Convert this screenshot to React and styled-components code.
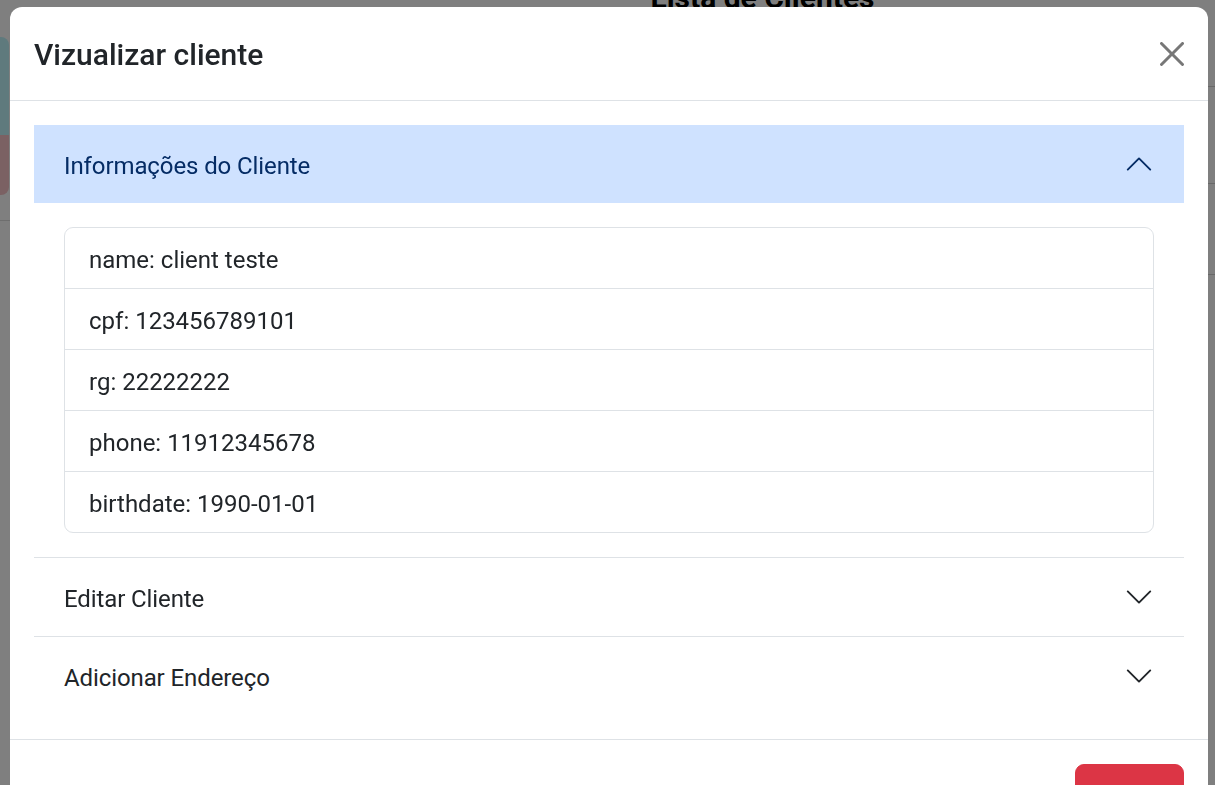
import React from 'react';
import styled, { createGlobalStyle } from 'styled-components';

const Global = createGlobalStyle`
  html, body { margin: 0; padding: 0; height: 100%; overflow: hidden; }
  body {
    font-family: Roboto, "Liberation Sans", sans-serif;
    color: #212529;
    background: #fff;
  }
  * { box-sizing: border-box; }
`;

/* ---------- background page (dimmed) ---------- */
const Page = styled.div`
  display: grid;
  grid-template-columns: 10px 1fr;
  height: 100vh;
`;

const SideCol = styled.div`
  display: flex;
  flex-direction: column;
  padding-top: 37px;
`;

const SideCard = styled.div`
  display: flex;
  flex-direction: column;
  width: 9px;
  border-radius: 0 8px 8px 0;
  overflow: hidden;
`;

const SideBlock = styled.div`
  height: ${(p) => p.$h}px;
  background: ${(p) => p.$bg};
`;

const SideRule = styled.div`
  margin-top: 25px;
  border-top: 1px solid #dcdcdc;
`;

const Main = styled.div`
  display: flex;
  flex-direction: column;
`;

const PageTitle = styled.h2`
  margin: -22px 0 0 0;
  padding-left: 300px;
  text-align: center;
  font-size: 30px;
  font-weight: 700;
  line-height: 40px;
  color: #000;
`;

const TableRow = styled.div`
  height: ${(p) => p.$h}px;
  border-bottom: 1px solid #d0d0d0;
`;

const Backdrop = styled.div`
  position: fixed;
  inset: 0;
  background: rgba(0, 0, 0, 0.5);
  z-index: 1;
`;

/* ---------- modal ---------- */
const Dialog = styled.div`
  position: fixed;
  top: 7px;
  left: 10px;
  right: 7px;
  z-index: 2;
  background: #fff;
  border-radius: 12px;
  overflow: hidden;
`;

const Header = styled.div`
  height: 94px;
  display: flex;
  align-items: center;
  justify-content: space-between;
  padding: 0 24px;
  border-bottom: 1px solid #dee2e6;
`;

const Title = styled.h5`
  margin: 0;
  padding-top: 2px;
  font-size: 30px;
  font-weight: 500;
  line-height: 36px;
  color: #212529;
`;

const CloseButton = styled.button`
  width: 24px;
  height: 24px;
  padding: 0;
  border: 0;
  background: transparent;
  display: flex;
  cursor: pointer;
  opacity: 0.53;
`;

const Body = styled.div`
  padding: 24px;
`;

const Accordion = styled.div`
  display: flex;
  flex-direction: column;
`;

const Item = styled.div`
  border-bottom: ${(p) => (p.$last ? '0' : '1px solid #dee2e6')};
`;

const ItemButton = styled.button`
  width: 100%;
  height: 78px;
  display: flex;
  align-items: center;
  justify-content: space-between;
  padding: 0 30px;
  border: 0;
  font-family: inherit;
  font-size: 24px;
  text-align: left;
  background: ${(p) => (p.$open ? '#cfe2ff' : '#fff')};
  color: ${(p) => (p.$open ? '#052c65' : '#212529')};
  cursor: pointer;
`;

const ItemLabel = styled.span`
  padding-top: 4px;
  letter-spacing: -0.1px;
`;

const ItemBody = styled.div`
  padding: 24px 30px;
`;

const List = styled.ul`
  margin: 0;
  padding: 0;
  list-style: none;
  border: 1px solid #dee2e6;
  border-radius: 9px;
`;

const ListItem = styled.li`
  padding: 14px 24px 10px;
  font-size: 24px;
  line-height: 36px;
  color: #212529;
  & + & { border-top: 1px solid #dee2e6; }
`;

const Footer = styled.div`
  display: flex;
  justify-content: flex-end;
  padding: 24px;
  border-top: 1px solid #dee2e6;
`;

const DangerButton = styled.button`
  padding: 14px 17px 4px;
  border: 1px solid #dc3545;
  border-radius: 9px;
  background: #dc3545;
  color: #fff;
  font-family: inherit;
  font-size: 24px;
  line-height: 36px;
  cursor: pointer;
`;

const Chevron = ({ up, color }) => (
  <svg width="30" height="30" viewBox="0 0 16 16" fill="none" stroke={color}
    strokeLinecap="round" strokeLinejoin="round"
    style={{ transform: up ? 'rotate(180deg)' : 'none', flexShrink: 0 }}>
    <path d="M2 5L8 11L14 5" />
  </svg>
);

const CloseIcon = () => (
  <svg width="24" height="24" viewBox="0 0 16 16" fill="#000">
    <path d="M.293.293a1 1 0 0 1 1.414 0L8 6.586 14.293.293a1 1 0 1 1 1.414 1.414L9.414 8l6.293 6.293a1 1 0 0 1-1.414 1.414L8 9.414l-6.293 6.293a1 1 0 0 1-1.414-1.414L6.586 8 .293 1.707a1 1 0 0 1 0-1.414" />
  </svg>
);

const client = [
  'name: client teste',
  'cpf: 123456789101',
  'rg: 22222222',
  'phone: 11912345678',
  'birthdate: 1990-01-01',
];

export default function App() {
  return (
    <>
      <Global />
      <Page>
        <SideCol>
          <SideCard>
            <SideBlock $h={98} $bg="#bef4fa" />
            <SideBlock $h={60} $bg="#f6c2c6" />
          </SideCard>
          <SideRule />
        </SideCol>
        <Main>
          <PageTitle>Lista de Clientes</PageTitle>
          <TableRow $h={69} />
          <TableRow $h={97} />
          <TableRow $h={91} />
        </Main>
      </Page>
      <Backdrop />
      <Dialog>
        <Header>
          <Title>Vizualizar cliente</Title>
          <CloseButton aria-label="Close"><CloseIcon /></CloseButton>
        </Header>
        <Body>
          <Accordion>
            <Item>
              <ItemButton $open>
                <ItemLabel>Informações do Cliente</ItemLabel>
                <Chevron up color="#052c65" />
              </ItemButton>
              <ItemBody>
                <List>
                  {client.map((c) => (
                    <ListItem key={c}>{c}</ListItem>
                  ))}
                </List>
              </ItemBody>
            </Item>
            <Item>
              <ItemButton>
                <ItemLabel>Editar Cliente</ItemLabel>
                <Chevron color="#212529" />
              </ItemButton>
            </Item>
            <Item $last>
              <ItemButton>
                <ItemLabel>Adicionar Endereço</ItemLabel>
                <Chevron color="#212529" />
              </ItemButton>
            </Item>
          </Accordion>
        </Body>
        <Footer>
          <DangerButton>Fechar</DangerButton>
        </Footer>
      </Dialog>
    </>
  );
}
